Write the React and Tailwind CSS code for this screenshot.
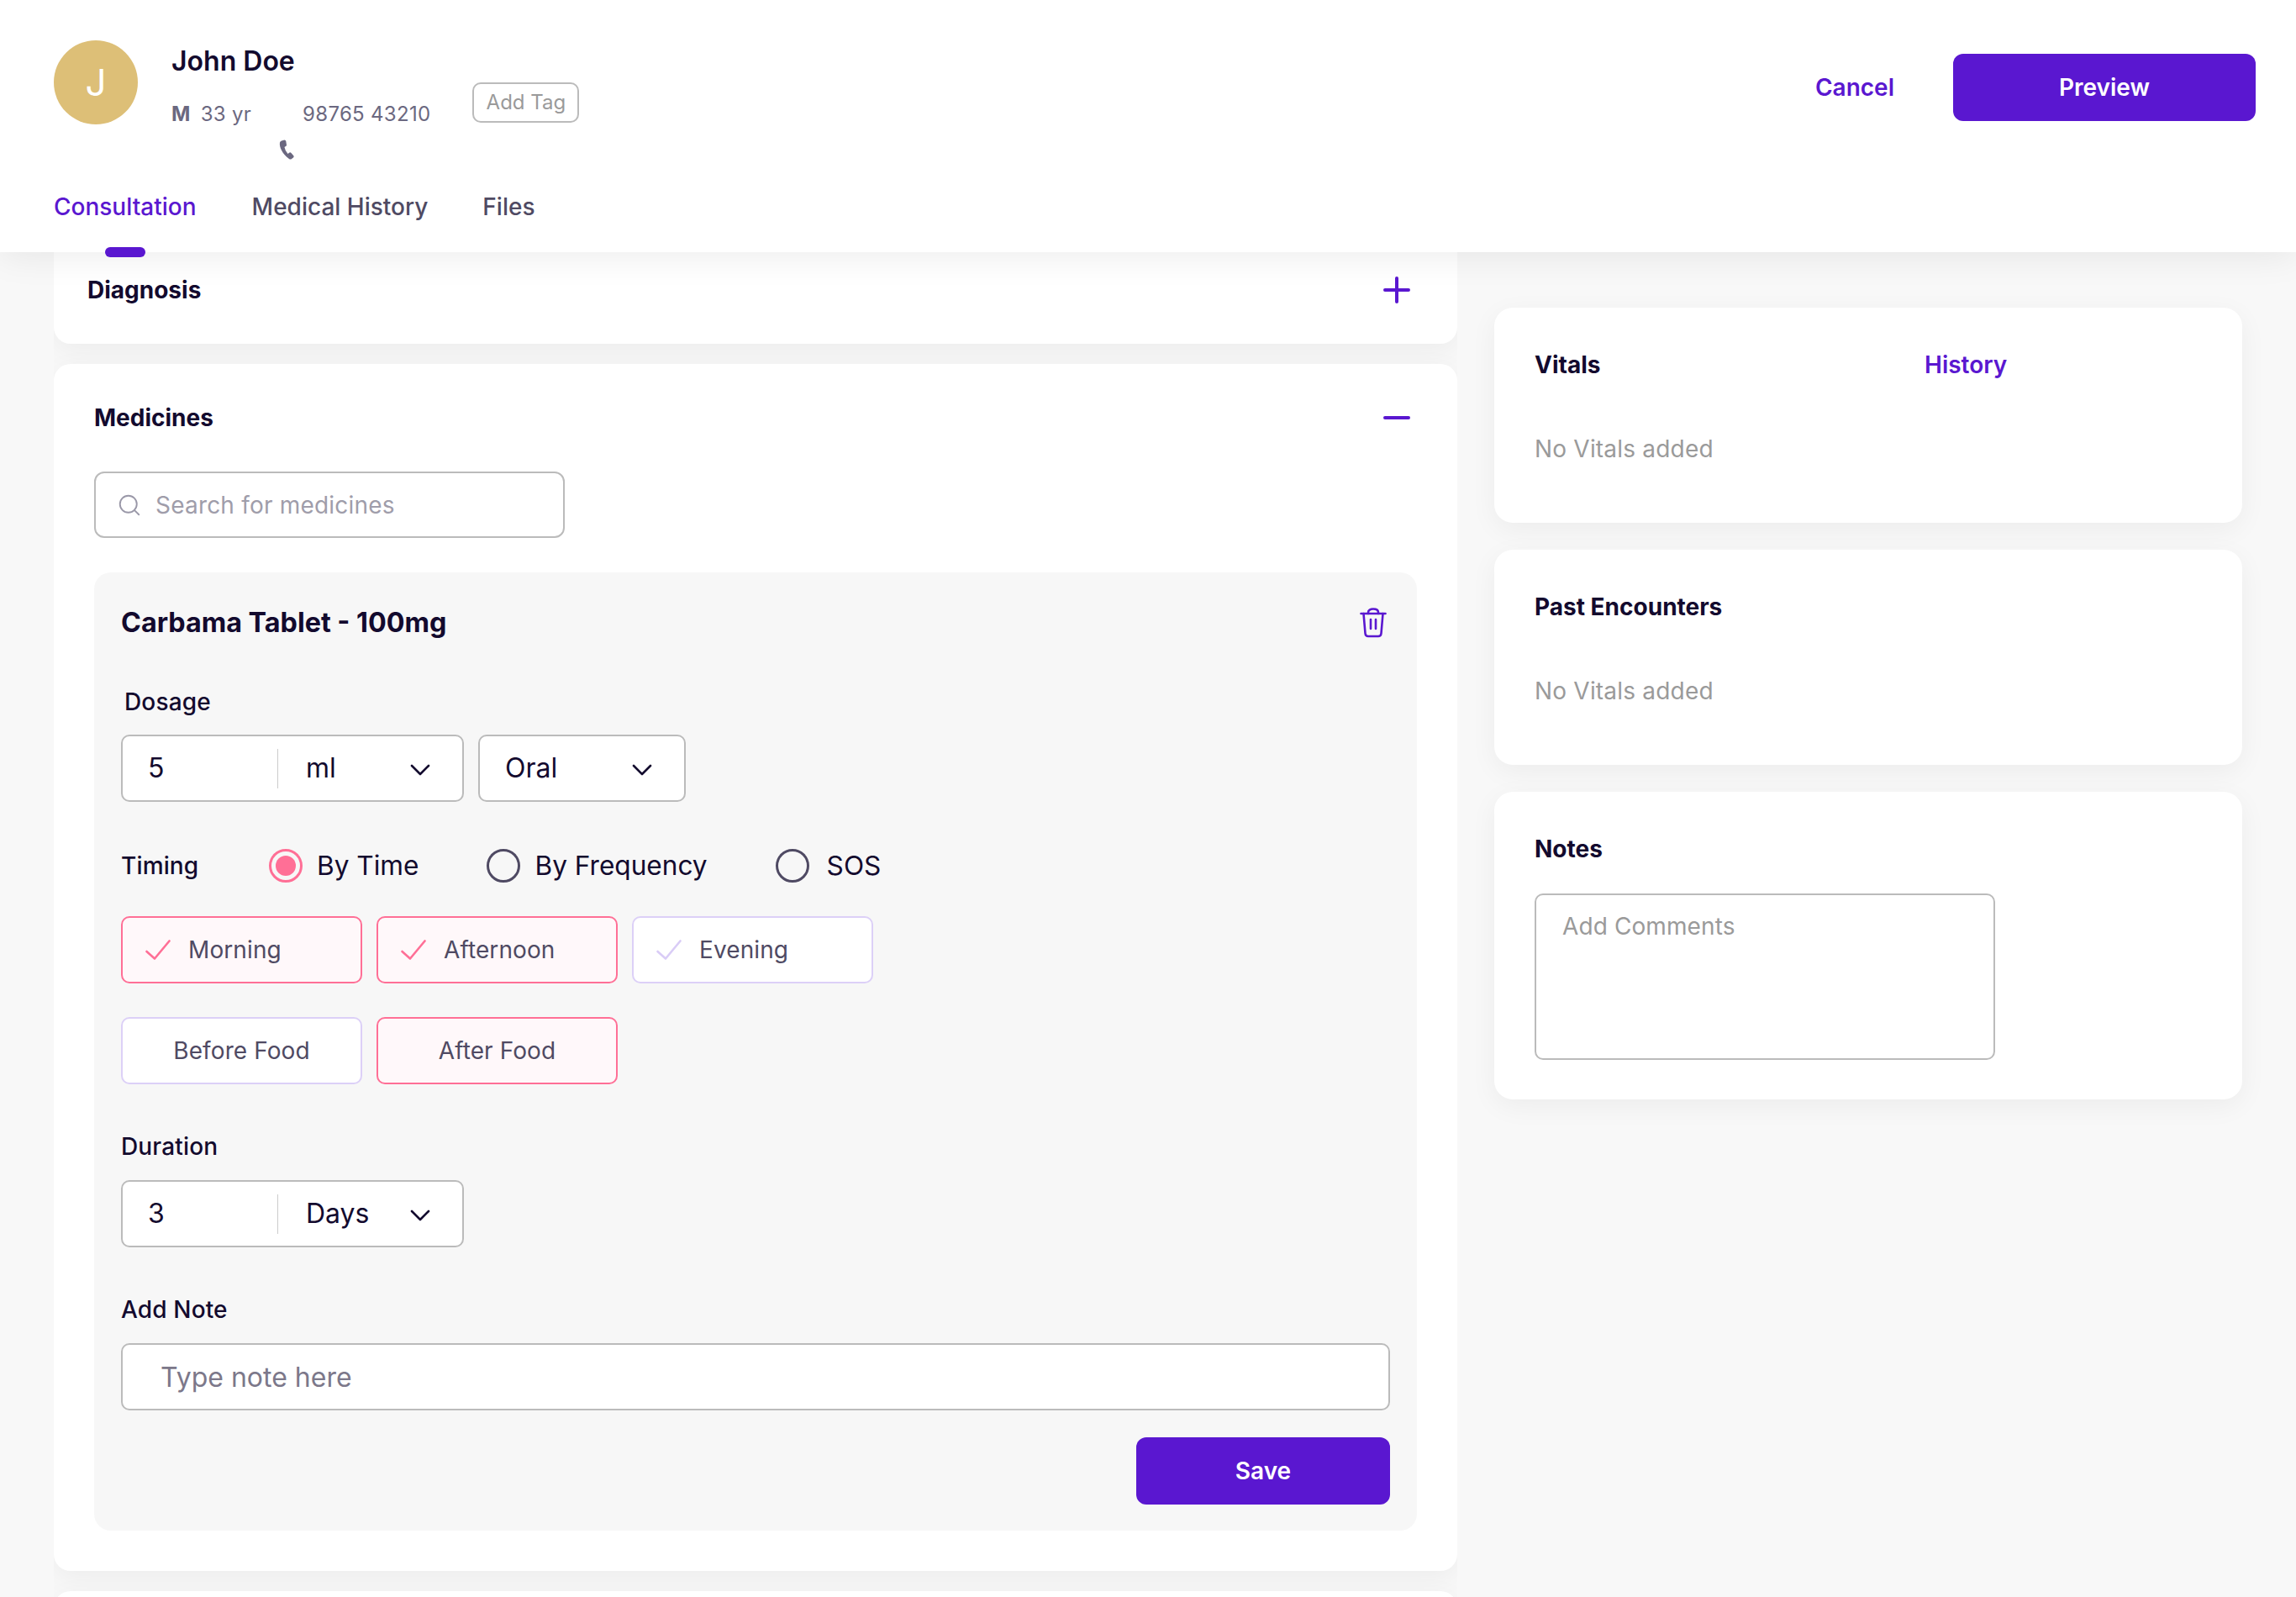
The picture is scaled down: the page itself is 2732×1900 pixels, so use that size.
import { Search } from 'lucide-react'

function Chevron() {
    return (
        <svg width="24" height="14" viewBox="0 0 24 14" fill="none" className="mt-[3px] shrink-0">
            <path d="M2 2L12 12L22 2" stroke="#130a2e" strokeWidth="2.6" strokeLinecap="round" strokeLinejoin="round" />
        </svg>
    )
}

function Check({ color }) {
    return (
        <svg width="30" height="24" viewBox="0 0 30 24" fill="none" className="shrink-0">
            <path d="M1.5 14L11 22.5L28.5 1.5" stroke={color} strokeWidth="2.6" strokeLinecap="round" strokeLinejoin="round" />
        </svg>
    )
}

function Radio({ label, active, wide }) {
    return (
        <div className={`flex items-center ${wide ? 'gap-[21px]' : 'gap-[17px]'}`}>
            {active ? (
                <div className="w-[40px] h-[40px] rounded-full border-[3px] border-[#ff6f96] flex items-center justify-center">
                    <div className="w-[24px] h-[24px] rounded-full bg-[#ff6f96]" />
                </div>
            ) : (
                <div className="w-[40px] h-[40px] rounded-full border-[3px] border-[#4f4a63]" />
            )}
            <span className="text-[31.6px] leading-[40px] text-[#130a2e]">{label}</span>
        </div>
    )
}

function Chip({ label, active, check }) {
    return (
        <div
            className={`w-[287px] h-[80px] rounded-[10px] border-2 flex items-center text-[28px] tracking-[0.1px] text-[#4f4a63] ${
                active ? 'border-[#ff6f96] bg-[#fff8fa]' : 'border-[#dcd0f7] bg-white'
            } ${check ? 'pl-[27px] gap-[21px]' : 'justify-center'}`}
        >
            {check && <Check color={active ? '#ff6f96' : '#d9ccf6'} />}
            <span>{label}</span>
        </div>
    )
}

function UnitInput({ value, unit }) {
    return (
        <div className="w-[408px] h-[80px] rounded-[10px] border-2 border-[#bbbbbb] bg-white flex items-center text-[32px] text-[#130a2e]">
            <div className="w-[184px] pl-[30px]">{value}</div>
            <div className="w-px h-[47px] bg-[#cccccc]" />
            <div className="flex-1 flex items-center justify-between pl-[33px] pr-[38px]">
                <span>{unit}</span>
                <Chevron />
            </div>
        </div>
    )
}

function Label({ children }) {
    return <div className="text-[28px] leading-[36px] font-medium tracking-[0.15px] text-[#130a2e]">{children}</div>
}

function SideCard({ title, action }) {
    return (
        <div className="bg-white rounded-[22px] shadow-[0_8px_32px_rgba(0,0,0,0.05)] h-[256px] px-[48px] pt-[48px]">
            <div className="flex text-[28px] leading-[40px] font-bold">
                <div className="w-[464px] text-[#130a2e]">{title}</div>
                {action && <div className="font-semibold text-[#5a17d0]">{action}</div>}
            </div>
            <div className="mt-[60px] text-[28px] leading-[40px] tracking-[0.2px] text-[#9a9a9a]">No Vitals added</div>
        </div>
    )
}

export default function App() {
    return (
        <div className="h-[1900px] overflow-hidden bg-[#f8f8f8] font-[Inter,sans-serif]">
            {/* Header */}
            <header className="relative z-10 h-[300px] bg-white px-[64px] pt-[48px] shadow-[0_4px_40px_rgba(0,0,0,0.08)]">
                <div className="flex justify-between">
                    <div className="flex">
                        <div className="w-[100px] h-[100px] rounded-full bg-[#ddbf77] flex items-center justify-center text-[44px] text-white">
                            J
                        </div>
                        <div className="ml-[40px]">
                            <div className="mt-[1px] text-[32px] leading-[48px] font-semibold text-[#130a2e]">John Doe</div>
                            <div className="mt-[24px] flex text-[24px] leading-[30px] tracking-[0.3px] text-[#6b6880]">
                                <span className="font-bold">M</span>
                                <span className="ml-[12px]">33 yr</span>
                                <span className="ml-[61px]">98765 43210</span>
                            </div>
                            <svg width="20" height="24" viewBox="0 0 20 24" className="mt-[15px] ml-[127px]" fill="#6b6880">
                                <path d="M4 1.5L7.5 0.5Q9 0.5 9.3 2L10 6.5Q10 7.5 9 8L7.5 9Q8 13 11.5 17L13.5 15.5Q14.5 15 15.5 16L18.5 19.5Q19 20.5 18 21.5L16 23Q14.5 24 13 23C5 17 1 9 2 3.5Q2.5 2 4 1.5Z" />
                            </svg>
                        </div>
                        <div className="ml-[50px] mt-[50px] h-[48px] w-[127px] rounded-[10px] border-2 border-[#bbbbbb] flex items-center justify-center text-[24px] text-[#9a9a9a]">
                            Add Tag
                        </div>
                    </div>
                    <div className="flex items-center gap-[70px] h-[80px] mt-[16px] -mr-[16px]">
                        <button className="text-[28px] font-semibold text-[#5a17d0]">Cancel</button>
                        <button className="w-[360px] h-[80px] rounded-[12px] bg-[#5a17d0] text-[28px] font-semibold text-white">
                            Preview
                        </button>
                    </div>
                </div>
                <nav className="mt-[36px] flex gap-[65px] text-[28px] leading-[40px] font-medium text-[#4f4a63]">
                    <div className="relative mr-[1px] text-[#5a17d0]">
                        Consultation
                        <div className="absolute top-[68px] left-1/2 -translate-x-1/2 w-[48px] h-[12px] rounded-full bg-[#5a17d0]" />
                    </div>
                    <div>Medical History</div>
                    <div>Files</div>
                </nav>
            </header>

            <main className="flex items-start">
                {/* Left column */}
                <div className="ml-[64px] w-[1670px] h-[1600px] overflow-hidden flex flex-col gap-[24px]">
                    <div className="shrink-0 h-[109px] bg-white rounded-b-[20px] shadow-[0_8px_32px_rgba(0,0,0,0.05)] pl-[40px] pr-[56px] pb-[19px] flex justify-between items-center">
                        <div className="text-[28px] leading-[40px] font-bold text-[#130a2e]">Diagnosis</div>
                        <svg width="32" height="32" viewBox="0 0 32 32" fill="none">
                            <path d="M2 16H30M16 2V30" stroke="#5a17d0" strokeWidth="4" strokeLinecap="round" />
                        </svg>
                    </div>

                    <div className="shrink-0 bg-white rounded-[20px] shadow-[0_8px_32px_rgba(0,0,0,0.05)] px-[48px] pt-[44px] pb-[48px]">
                        <div className="flex justify-between items-center pr-[8px]">
                            <div className="text-[28px] leading-[40px] font-bold text-[#130a2e]">Medicines</div>
                            <svg width="32" height="32" viewBox="0 0 32 32" fill="none">
                                <path d="M2 16H30" stroke="#5a17d0" strokeWidth="4" strokeLinecap="round" />
                            </svg>
                        </div>

                        <div className="mt-[44px] w-[560px] h-[79px] rounded-[12px] border-2 border-[#bbbbbb] flex items-center pl-[25px] gap-[16px]">
                            <Search size={30} strokeWidth={1.5} color="#9a98a8" />
                            <input
                                placeholder="Search for medicines"
                                className="flex-1 outline-none text-[28px] tracking-[0.2px] placeholder:text-[#9f9daa]"
                            />
                        </div>

                        <div className="mt-[41px] rounded-[20px] bg-[#f7f7f7] px-[32px] pt-[40px] pb-[31px]">
                            <div className="flex justify-between items-center pr-[4px]">
                                <div className="text-[32.3px] leading-[40px] font-bold text-[#130a2e]">
                                    Carbama Tablet - 100mg
                                </div>
                                <svg width="32" height="36" viewBox="0 0 32 36" fill="none" stroke="#5a17d0" strokeWidth="2.6" strokeLinecap="round" strokeLinejoin="round">
                                    <path d="M1.5 7H30.5" />
                                    <path d="M10 7V5.5C10 3 12.5 1.5 16 1.5C19.5 1.5 22 3 22 5.5V7" />
                                    <path d="M4.5 7L6.5 30.5C6.7 32.7 8 34 10 34H22C24 34 25.3 32.7 25.5 30.5L27.5 7" />
                                    <path d="M13 14V25M19 14V25" />
                                </svg>
                            </div>

                            <div className="mt-[56px] ml-[4px]">
                                <Label>Dosage</Label>
                            </div>
                            <div className="mt-[21px] flex gap-[17px]">
                                <UnitInput value="5" unit="ml" />
                                <div className="w-[247px] h-[80px] rounded-[10px] border-2 border-[#bbbbbb] bg-white flex items-center justify-between pl-[30px] pr-[38px] text-[32px] text-[#130a2e]">
                                    <span>Oral</span>
                                    <Chevron />
                                </div>
                            </div>

                            <div className="mt-[55px] flex items-center">
                                <div className="w-[176px] text-[28px] font-medium tracking-[0.15px] text-[#130a2e]">Timing</div>
                                <div className="flex gap-[81px]">
                                    <Radio label="By Time" active />
                                    <Radio label="By Frequency" />
                                    <Radio label="SOS" wide />
                                </div>
                            </div>

                            <div className="mt-[39px] flex gap-[17px]">
                                <Chip label="Morning" active check />
                                <Chip label="Afternoon" active check />
                                <Chip label="Evening" check />
                            </div>
                            <div className="mt-[40px] flex gap-[17px]">
                                <Chip label="Before Food" />
                                <Chip label="After Food" active />
                            </div>

                            <div className="mt-[56px]">
                                <Label>Duration</Label>
                            </div>
                            <div className="mt-[22px]">
                                <UnitInput value="3" unit="Days" />
                            </div>

                            <div className="mt-[56px]">
                                <Label>Add Note</Label>
                            </div>
                            <input
                                placeholder="Type note here"
                                className="mt-[22px] block w-full h-[80px] rounded-[10px] border-2 border-[#bbbbbb] bg-white px-[45px] outline-none text-[32px] placeholder:text-[#7c788a]"
                            />

                            <div className="mt-[32px] flex justify-end">
                                <button className="w-[302px] h-[80px] rounded-[12px] bg-[#5a17d0] text-[28px] font-semibold text-white">
                                    Save
                                </button>
                            </div>
                        </div>
                    </div>

                    <div className="shrink-0 h-[100px] bg-white rounded-[20px] shadow-[0_8px_32px_rgba(0,0,0,0.05)]" />
                </div>

                {/* Right column */}
                <div className="ml-[44px] mt-[66px] w-[890px] flex flex-col gap-[32px]">
                    <SideCard title="Vitals" action="History" />
                    <SideCard title="Past Encounters" />
                    <div className="bg-white rounded-[22px] shadow-[0_8px_32px_rgba(0,0,0,0.05)] px-[48px] pt-[48px] pb-[47px]">
                        <div className="text-[28px] leading-[40px] font-bold text-[#130a2e]">Notes</div>
                        <textarea
                            placeholder="Add Comments"
                            className="mt-[33px] block w-[548px] h-[198px] rounded-[10px] border-2 border-[#bbbbbb] px-[31px] pt-[17px] outline-none resize-none text-[28px] leading-[40px] tracking-[0.1px] placeholder:text-[#9a9a9a]"
                        />
                    </div>
                </div>
            </main>
        </div>
    )
}
